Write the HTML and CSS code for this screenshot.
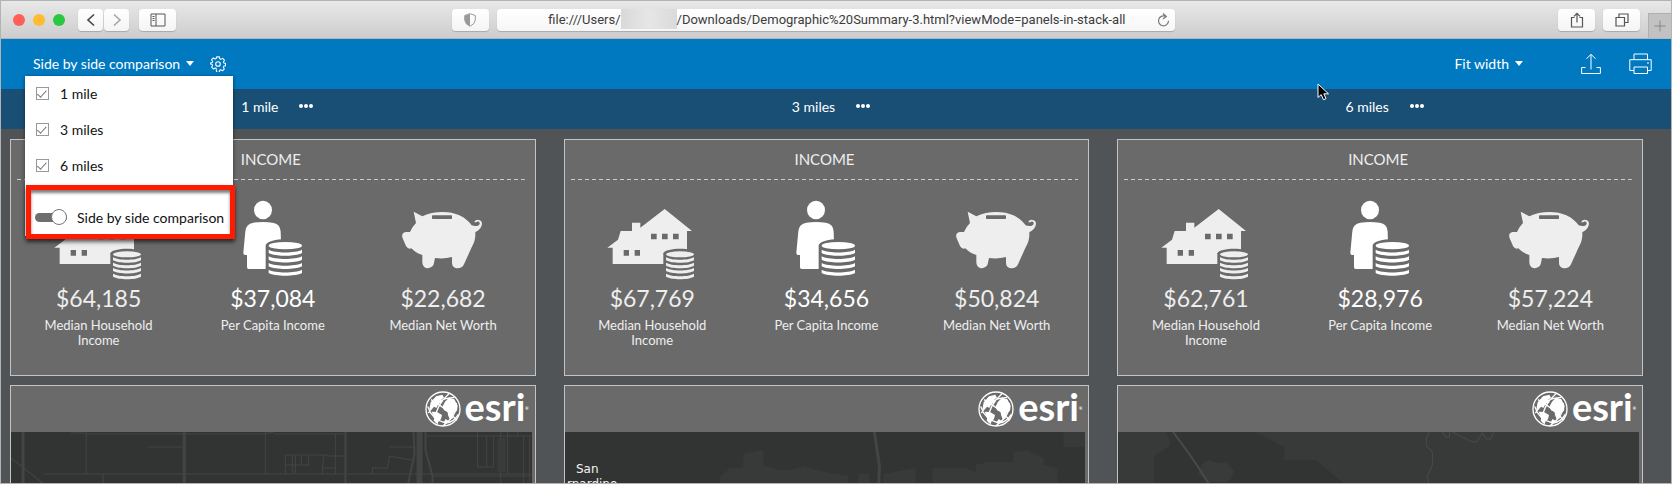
FILE: index.html
```html
<!DOCTYPE html>
<html lang="en">
<head>
  <meta charset="UTF-8">
  <title>Demographic Summary</title>
  <link rel="stylesheet" href="styles.css">
</head>
<body>
  <!-- shared icons -->
  <svg class="defs" aria-hidden="true">
    <symbol id="house" viewBox="51 27 270 246">
      <path d="M52 173 L84 149 L92 123 H126 V98 H151 V113 L224 57 L306 123 H291 V222 H68 V173 Z"/>
      <path class="hole" d="M183 131h17v17h-17z M216 131h17v17h-17z M249 131h17v17h-17z M101 180h16v17h-16z M134 180h16v17h-16z"/>
      <path class="hole" d="M220 224 V190 C226 172 314 172 320 190 V224 Z"/>
      <ellipse cx="270" cy="193" rx="42" ry="9"/>
      <path d="M228 202 C245 212 295 212 312 202 V211 C295 221 245 221 228 211 Z"/>
      <path d="M228 218 C245 228 295 228 312 218 V227 C295 237 245 237 228 227 Z"/>
      <path d="M228 234 C245 244 295 244 312 234 V243 C295 253 245 253 228 243 Z"/>
      <path d="M228 251 C245 261 295 261 312 251 V260 C295 270 245 270 228 260 Z"/>
    </symbol>
    <symbol id="person" viewBox="63 27 270 246">
      <ellipse cx="168" cy="60" rx="27" ry="28"/>
      <path d="M139 98 Q168 94 197 98 Q220 101 221 125 L222 160 L176 237 H125 Q120 237 120 232 V195 H113 Q109 194 109 188 L115 124 Q117 101 139 98 Z"/>
      <path class="hole" d="M176 240 V165 C184 142 286 142 294 165 V240 Z"/>
      <ellipse cx="235" cy="167" rx="50" ry="11"/>
      <path d="M185 179 C205 190 265 190 285 179 V189 C265 200 205 200 185 189 Z"/>
      <path d="M185 199 C205 210 265 210 285 199 V209 C265 220 205 220 185 209 Z"/>
      <path d="M185 219 C205 230 265 230 285 219 V229 C265 240 205 240 185 229 Z"/>
      <path d="M185 239 C205 250 265 250 285 239 V249 C265 260 205 260 185 249 Z"/>
    </symbol>
    <symbol id="pig" viewBox="573 27 270 246">
      <path d="M620 65 L646 79 C676 63 728 61 757 76 C776 85 787 96 794 106 C803 109 817 109 818 101 C819 94 810 92 808 97 H802 C803 88 818 86 824 96 C828 108 817 122 805 126 C806 150 800 161 793 174 L771 223 C765 239 735 240 735 218 V201 Q710 208 684 204 L680 223 C674 239 646 240 646 215 V195 C632 191 621 184 613 175 C604 178 599 173 596 166 L587 145 C583 134 587 127 596 126 H609 C614 115 620 107 627 99 Z"/>
      <rect class="hole" x="675" y="76" width="60" height="11" rx="2"/>
    </symbol>
    <symbol id="globe" viewBox="0 0 108 108">
      <circle cx="54" cy="54" r="51" fill="none" stroke="#fff" stroke-width="4"/>
      <path d="M18 26 Q58 48 96 88 M10 66 Q42 18 88 20 M28 90 Q34 40 72 8 M54 104 Q98 72 94 36 M8 46 Q20 86 62 96 Q86 94 100 70" fill="none" stroke="#fff" stroke-width="4"/>
      <path d="M17 34 L33 16 L52 11 L57 20 L48 27 L52 35 L41 38 L34 51 L25 46 L12 60 Z"/>
      <path d="M60 32 L72 20 L88 25 L98 44 L96 59 L86 66 L83 82 L75 87 L69 72 L68 62 L57 58 L53 46 Z"/>
      <path d="M20 62 L36 63 L51 72 L48 84 L40 92 L38 100 L29 93 L27 80 Z M62 84 L72 91 L63 99 L55 95 Z"/>
    </symbol>
  </svg>

  <div class="window">
    <header class="browser">
      <div class="browser-left">
        <span class="light red"></span>
        <span class="light yellow"></span>
        <span class="light green"></span>
        <div class="nav">
          <button class="chrome-btn" aria-label="Back">
            <svg width="12" height="14" viewBox="0 0 12 14"><path d="M9 1.500 L3 7 L9 12.500" stroke="#444" stroke-width="1.600"/></svg>
          </button>
          <button class="chrome-btn" aria-label="Forward">
            <svg width="12" height="14" viewBox="0 0 12 14"><path d="M3 1.500 L9 7 L3 12.500" stroke="#a5a5a5" stroke-width="1.600"/></svg>
          </button>
        </div>
        <button class="chrome-btn wide" aria-label="Sidebar">
          <svg width="16" height="14" viewBox="0 0 16 14"><path d="M1 1h14v12H1z M6 1v12 M2.500 3.500h2 M2.500 5.500h2 M2.500 7.500h2" stroke="#555"/></svg>
        </button>
      </div>
      <div class="browser-center">
        <button class="chrome-btn wide" aria-label="Privacy report">
          <svg width="12" height="14" viewBox="0 0 12 14"><path d="M6 .7 L11.300 2.500 V7 Q11 11 6 13.300 Q1 11 .7 7 V2.500 Z" stroke="#999"/><path d="M6 1 L1 2.700 V7 Q1 11 6 13 Z" fill="#999"/></svg>
        </button>
        <div class="address">
          <div class="url">file:///Users/<span class="redacted"></span>/Downloads/Demographic%20Summary-3.html?viewMode=panels-in-stack-all</div>
          <button class="reload" aria-label="Reload">
            <svg width="13" height="14" viewBox="0 0 13 14"><path d="M9 3.500 A5 5 0 1 0 11.500 7.800 M6 .5 L9.300 3.500 L6 6" stroke="#777" stroke-width="1.200"/></svg>
          </button>
        </div>
      </div>
      <div class="browser-right">
        <button class="chrome-btn wide" aria-label="Share">
          <svg width="14" height="16" viewBox="0 0 14 16"><path d="M4.500 5.500 H1.500 V15 H12.500 V5.500 H9.500 M7 10.500 V1.500 M4 4.300 L7 1.300 L10 4.300" stroke="#555" stroke-width="1.200"/></svg>
        </button>
        <button class="chrome-btn wide" aria-label="Show tabs">
          <svg width="14" height="14" viewBox="0 0 14 14"><path d="M1 4.500h8.500V13H1z M4 4.500V1h9v8.500H9.500" stroke="#555" stroke-width="1.200"/></svg>
        </button>
        <button class="new-tab" aria-label="New tab">
          <svg width="12" height="12" viewBox="0 0 12 12"><path d="M6 .5v11 M.5 6h11" stroke="#888"/></svg>
        </button>
      </div>
    </header>

    <div class="toolbar">
      <div class="view-select">
        <button class="drop">Side by side comparison <span class="caret"></span></button>
        <button class="icon-btn" aria-label="Settings">
          <svg width="16" height="16" viewBox="0 0 18 18"><circle cx="9" cy="9" r="2.600" stroke="#fff" stroke-width="1.200"/><path d="M7.500 1h3l.5 2.200 1.200.6 2-1.100 2 2-1.100 2 .6 1.200 1.800.4v2.600l-1.900.5-.6 1.200 1.100 2-2 2-2-1.100-1.200.6-.5 2.200h-3L7 14.100l-1.200-.6-2 1.100-2-2 1.100-2-.5-1.200L.6 9V7.900l1.800-.5.6-1.200-1.200-2 2-2 2 1.200 1.200-.6Z" stroke="#fff" stroke-width="1.200" stroke-linejoin="round"/></svg>
        </button>
        <div class="menu">
          <label class="option"><input type="checkbox" class="check" checked>1 mile</label>
          <label class="option"><input type="checkbox" class="check" checked>3 miles</label>
          <label class="option"><input type="checkbox" class="check" checked>6 miles</label>
          <label class="option switch-row"><input type="checkbox" role="switch" class="switch" checked>Side by side comparison</label>
        </div>
      </div>
      <div class="tools">
        <button class="drop">Fit width <span class="caret"></span></button>
        <button class="icon-btn export" aria-label="Export">
          <svg width="20" height="22" viewBox="0 0 20 22"><path d="M4.500 14.500 H.6 V20.500 H19.400 V14.500 H15.500 M10 16.500 V1.500 M5.500 5.800 L10 1.300 L14.500 5.800" stroke="#fff"/></svg>
        </button>
        <button class="icon-btn" aria-label="Print">
          <svg width="23" height="22" viewBox="0 0 23 22"><path d="M5 6.500 V1 H18.500 V6.500 M5 17.500 H.8 V6.700 H22.200 V17.500 H18.500 M5 14 H18.500 V20.500 H5 Z M18 10h2" stroke="#fff"/></svg>
        </button>
      </div>
    </div>

    <div class="areas columns">
      <div class="area">1 mile <button class="more" aria-label="More options for 1 mile"><i></i><i></i><i></i></button></div>
      <div class="area">3 miles <button class="more" aria-label="More options for 3 miles"><i></i><i></i><i></i></button></div>
      <div class="area">6 miles <button class="more" aria-label="More options for 6 miles"><i></i><i></i><i></i></button></div>
    </div>

    <main class="report columns">
      <section class="card">
        <h2>INCOME</h2>
        <div class="stats">
          <div class="stat">
            <svg class="stat-icon"><use href="#house"/></svg>
            <div class="value">$64,185</div>
            <div class="name">Median Household Income</div>
          </div>
          <div class="stat main">
            <svg class="stat-icon"><use href="#person"/></svg>
            <div class="value">$37,084</div>
            <div class="name">Per Capita Income</div>
          </div>
          <div class="stat">
            <svg class="stat-icon"><use href="#pig"/></svg>
            <div class="value">$22,682</div>
            <div class="name">Median Net Worth</div>
          </div>
        </div>
      </section>
      <section class="card">
        <h2>INCOME</h2>
        <div class="stats">
          <div class="stat">
            <svg class="stat-icon"><use href="#house"/></svg>
            <div class="value">$67,769</div>
            <div class="name">Median Household Income</div>
          </div>
          <div class="stat main">
            <svg class="stat-icon"><use href="#person"/></svg>
            <div class="value">$34,656</div>
            <div class="name">Per Capita Income</div>
          </div>
          <div class="stat">
            <svg class="stat-icon"><use href="#pig"/></svg>
            <div class="value">$50,824</div>
            <div class="name">Median Net Worth</div>
          </div>
        </div>
      </section>
      <section class="card">
        <h2>INCOME</h2>
        <div class="stats">
          <div class="stat">
            <svg class="stat-icon"><use href="#house"/></svg>
            <div class="value">$62,761</div>
            <div class="name">Median Household Income</div>
          </div>
          <div class="stat main">
            <svg class="stat-icon"><use href="#person"/></svg>
            <div class="value">$28,976</div>
            <div class="name">Per Capita Income</div>
          </div>
          <div class="stat">
            <svg class="stat-icon"><use href="#pig"/></svg>
            <div class="value">$57,224</div>
            <div class="name">Median Net Worth</div>
          </div>
        </div>
      </section>

      <section class="card map-card">
        <div class="brand"><svg class="globe"><use href="#globe"/></svg><span>esri</span><small>®</small></div>
        <svg class="map" viewBox="0 0 520 200" preserveAspectRatio="xMinYMin slice">
          <g fill="none" stroke="#434545">
            <path d="M12 0V200 M173 0V200" stroke-width="3"/>
            <path d="M334 0V200" stroke-width="2"/>
            <path d="M75 2 V42 M254 0V42 M60 1H75L76 2H173 M173 2H254L262 0 M137 15H172 M33 42H520 M92 42V200 M0 26 L33 52 M324 2V24 M262 2H333"/>
            <path d="M274 23H314L316 24H333 M274 23V42 M281 23V40H284V24 M290 24V33H297V24 M274 33H290 M312 24L311 42 M311 36H324V42 M324 24V36 M361 42V36H376 M376 36L378 24L400 28 M378 15H402"/>
            <path d="M408 0 V200" stroke-width="6"/>
            <path d="M402 0 L403 22 L397 50 L394 70 M414 0V18L421 44V70" stroke-width="2"/>
            <path d="M466 0V35H482V4 M475 4V35 M466 4H520 M414 4H466 M489 0V200 M496 0V42 M506 0V4 M512 4V200 M518 4V200 M421 44H520"/>
          </g>
          <path d="M486 6h8v34h-8z" fill="#3a3c3b"/>
        </svg>
      </section>
      <section class="card map-card">
        <div class="brand"><svg class="globe"><use href="#globe"/></svg><span>esri</span><small>®</small></div>
        <svg class="map" viewBox="0 0 520 200" preserveAspectRatio="xMinYMin slice">
          <path d="M155 52 V44 L165 36H178V22L192 19H198V34L210 36V38H225L240 34L250 38L270 42L283 44V60H155 M293 60V42H304V60 M318 42L350 36V60H318 M367 60V36H400L410 40V33L422 30H448V20L462 18L478 26V33L492 36V60 M498 0H520V15H498" fill="#383a39"/>
          <path d="M309 0 L314 34 L313 62" fill="none" stroke="#434545" stroke-width="3"/>
          <text x="11" y="41">San</text>
          <text x="2" y="56">rnardino</text>
        </svg>
      </section>
      <section class="card map-card">
        <div class="brand"><svg class="globe"><use href="#globe"/></svg><span>esri</span><small>®</small></div>
        <svg class="map light-map" viewBox="0 0 520 200" preserveAspectRatio="xMinYMin slice">
          <path d="M48 0 H138 L166 15 V28H182L198 28L212 40L224 50V70H36V24L52 14V9Z" fill="#323433"/>
          <path d="M84 32L90 28L100 31L108 30L116 40L110 50H90L80 42Z" fill="#393b3a"/>
          <g fill="none" stroke="#484a49">
            <path d="M55 0 L72 23 L80 35 L96 60" stroke-width="2"/>
            <path d="M311 0L308 6V14L314 20V33L309 44L312 60 M324 0L327 5H331V0 M334 0L354 10H358L364 1L368 7H372L375 0"/>
          </g>
        </svg>
      </section>
    </main>

    <svg class="pointer" width="13" height="18" viewBox="0 0 13 18"><path d="M1 1 V14.500 L4.200 11.600 L6.500 16.800 L9 15.700 L6.800 10.800 H11.500 Z" fill="#000" stroke="#fff"/></svg>
  </div>
</body>
</html>
```

FILE: styles.css
```css
* {
  box-sizing: border-box;
}

body {
  margin: 0;
  font-family: Lato, sans-serif;
  font-size: 14px;
  color: #fff;
}

button {
  padding: 0;
  border: none;
  background: none;
  font: inherit;
  color: inherit;
  display: flex;
  align-items: center;
  justify-content: center;
}

svg {
  fill: none;
  display: block;
}

.defs {
  position: absolute;
  width: 0;
  height: 0;
}

.window {
  position: relative;
  display: flex;
  flex-direction: column;
  height: 100vh;
  overflow: hidden;
  border: 1px solid #b3b3b3;
  background: #505457;
}

/* browser bar */
.browser {
  display: grid;
  grid-template-columns: 270fr 433fr 297fr;
  flex: 0 0 38px;
  background: linear-gradient(#e8e8e8, #cdcdcd);
  border-bottom: 1px solid #b5b5b5;
}

.browser-left,
.browser-center,
.browser-right {
  display: flex;
  align-items: center;
  padding-top: 1px;
}

.browser-left {
  gap: 8px;
  padding-left: 12px;
}

.light {
  width: 12px;
  height: 12px;
  border-radius: 50%;
}

.red { background: #ff5f57; }
.yellow { background: #febc2e; }
.green { background: #28c840; }

.nav {
  display: flex;
  gap: 1px;
  margin: 0 2px 0 5px;
}

.chrome-btn {
  width: 25px;
  height: 22px;
  border-radius: 4px;
  background: linear-gradient(#fff, #f4f4f4);
  box-shadow: 0 1px 1px rgba(0,0,0,0.2);
}

.chrome-btn.wide {
  width: 37px;
}

.browser-center {
  gap: 8px;
}

.address {
  flex: 1;
  display: flex;
  align-items: center;
  height: 22px;
  padding: 0 5px 0 20px;
  border-radius: 4px;
  background: linear-gradient(#fff, #f6f6f6);
  box-shadow: 0 1px 1px rgba(0,0,0,0.2);
}

.url {
  flex: 1;
  display: flex;
  justify-content: center;
  font-family: Roboto, sans-serif;
  font-size: 13px;
  line-height: 22px;
  white-space: nowrap;
  color: #3c3c3c;
}

.redacted {
  width: 56px;
  height: 20px;
  background: linear-gradient(90deg, #d9d9d9, #e6e6e6, #dadada);
}

.browser-right {
  justify-content: flex-end;
  gap: 8px;
}

.new-tab {
  align-self: flex-end;
  width: 23px;
  height: 25px;
  background: #c2c2c2;
  border: 1px solid #b0b0b0;
  border-width: 1px 0 0 1px;
}

/* report toolbar */
.toolbar {
  display: flex;
  justify-content: space-between;
  flex: 0 0 50px;
  padding: 0 19px 0 24px;
  background: #0079c1;
}

.view-select {
  position: relative;
  display: flex;
  align-items: center;
  padding-left: 8px;
  gap: 16px;
}

.tools {
  display: flex;
  align-items: center;
  gap: 28px;
}

.export {
  margin-left: 30px;
}

.drop {
  gap: 6px;
  padding-bottom: 2px;
  font-size: 14px;
}

.caret {
  border: 4px solid transparent;
  border-top: 5px solid #fff;
  border-bottom: none;
}

.menu {
  position: absolute;
  z-index: 2;
  top: 37px;
  left: 0;
  width: 208px;
  background: #fff;
  color: #111;
  box-shadow: 0 1px 4px rgba(0,0,0,0.5);
}

.option {
  display: flex;
  align-items: center;
  gap: 11px;
  height: 36px;
  padding: 0 0 2px 11px;
}

.switch-row {
  gap: 10px;
  height: 54px;
  margin: 1px -2px -3px 1px;
  padding: 10px 0 0 4px;
  border: 5px solid #ff1a00;
  box-shadow: 0 3px 4px rgba(0,0,0,0.6), inset 0 3px 3px rgba(0,0,0,0.5);
}

.check {
  appearance: none;
  width: 13px;
  height: 13px;
  margin: 0;
  border: 1px solid #999;
  display: grid;
  place-items: center;
}

.check::after {
  content: "";
  width: 8px;
  height: 4px;
  border: 1px solid #777;
  border-width: 0 0 1px 1px;
  transform: rotate(-48deg) translateY(-1px);
}

.switch {
  appearance: none;
  display: flex;
  align-items: center;
  justify-content: flex-end;
  width: 32px;
  height: 9px;
  margin: 0;
  border-radius: 5px;
  background: #6e6e6e;
}

.switch::after {
  content: "";
  width: 14px;
  height: 14px;
  border: 1px solid #777;
  border-radius: 50%;
  background: #fff;
}

/* three study areas */
.columns {
  display: grid;
  grid-template-columns: repeat(3, 1fr);
  column-gap: 28px;
  padding: 0 28px 0 9px;
}

.areas {
  flex: 0 0 40px;
  background: #1a4f75;
}

.area {
  display: flex;
  align-items: center;
  justify-content: center;
  gap: 21px;
  padding: 0 0 6px 9px;
}

.more {
  gap: 1px;
  height: 14px;
}

.more i {
  width: 4px;
  height: 4px;
  border-radius: 50%;
  background: #fff;
}

.report {
  flex: 1;
  min-height: 0;
  align-content: start;
  row-gap: 9px;
  padding-top: 10px;
}

.card {
  height: 237px;
  border: 1px solid #c4c4c4;
  background: #6a6a6a;
}

.card h2 {
  margin: 0 10px 0 6px;
  height: 40px;
  font-size: 15px;
  font-weight: 400;
  line-height: 38px;
  text-align: center;
  color: #eee;
  background: repeating-linear-gradient(90deg, #ccc 0 4px, transparent 4px 7px) bottom / 100% 1px no-repeat;
}

.stats {
  display: grid;
  grid-template-columns: 176fr 174fr 168fr;
  padding: 19px 8px 0 0;
}

.stat {
  display: flex;
  flex-direction: column;
  align-items: center;
  color: #eee;
  fill: #eee;
}

.stat.main {
  color: #fff;
  fill: #fff;
}

.stat-icon {
  width: 90px;
  height: 82px;
  fill: inherit;
}

.hole {
  fill: #6a6a6a;
}

.value {
  margin-top: 3px;
  font-size: 23px;
  line-height: 28px;
}

.name {
  max-width: 120px;
  margin-top: 6px;
  font-size: 13px;
  line-height: 15px;
  text-align: center;
  color: #eee;
}

.map-card {
  padding-right: 3px;
}

.brand {
  display: flex;
  align-items: center;
  justify-content: flex-end;
  height: 46px;
  padding-right: 3px;
  font-size: 38px;
  font-weight: 700;
  line-height: 38px;
}

.brand span {
  padding-bottom: 6px;
}

.brand small {
  font-size: 4px;
}

.globe {
  width: 36px;
  height: 36px;
  margin-right: 4px;
  fill: #fff;
}

.map {
  width: 100%;
  height: 189px;
  background: #323433;
}

.light-map {
  background: #383a39;
}

.map text {
  font-family: "DejaVu Sans", sans-serif;
  font-size: 12px;
  fill: #f2f2f2;
}

.pointer {
  position: absolute;
  top: 82px;
  left: 1316px;
}
```
